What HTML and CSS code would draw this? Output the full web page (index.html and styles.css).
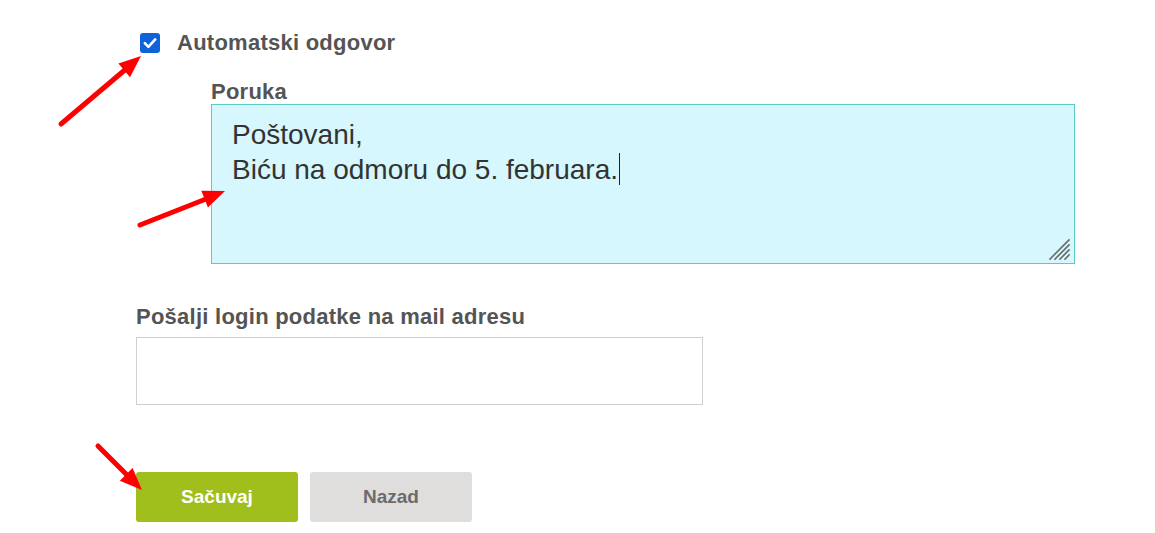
FILE: index.html
```html
<!DOCTYPE html>
<html lang="sr">
<head>
<meta charset="utf-8">
<title>Automatski odgovor</title>
<link rel="stylesheet" href="styles.css">
</head>
<body>
<div class="page">
  <form class="form">
    <label class="check-row">
      <span class="checkbox">
        <svg width="20" height="20" viewBox="0 0 20 20"><path d="M4.8 10.2 L8.4 13.8 L15.2 6.4" fill="none" stroke="#fff" stroke-width="2.6" stroke-linecap="round" stroke-linejoin="round"/></svg>
      </span>
      <span class="check-text">Automatski odgovor</span>
    </label>

    <div class="message">
      <div class="label">Poruka</div>
      <div class="textarea">
        <div>Poštovani,</div>
        <div>Biću na odmoru do 5. februara.<span class="caret"></span></div>
        <svg class="grip" width="24" height="24" viewBox="0 0 24 24">
          <g stroke="#6b6b6b" stroke-width="1.6" stroke-linecap="square">
            <line x1="2" y1="22" x2="21" y2="3"/>
            <line x1="7" y1="22" x2="21" y2="8"/>
            <line x1="12" y1="22" x2="21" y2="13"/>
            <line x1="17" y1="22" x2="21" y2="18"/>
          </g>
        </svg>
      </div>
    </div>

    <div class="field">
      <div class="label">Pošalji login podatke na mail adresu</div>
      <div class="input"></div>
    </div>

    <div class="buttons">
      <button type="button" class="btn btn-save">Sačuvaj</button>
      <button type="button" class="btn btn-back">Nazad</button>
    </div>
  </form>

  <svg class="arrows" width="1155" height="533" viewBox="0 0 1155 533">
    <g stroke="#ff0000" stroke-width="5" stroke-linecap="round" fill="none">
      <line x1="61" y1="124" x2="126" y2="69"/>
      <line x1="140" y1="225" x2="206" y2="199"/>
      <line x1="98" y1="446" x2="128" y2="476"/>
    </g>
    <g fill="#ff0000">
      <polygon points="141,56 118.4,63.4 130,77.2"/>
      <polygon points="225,191 201.3,190.8 207.9,207.6"/>
      <polygon points="142,490 119.8,480.7 132.6,468.1"/>
    </g>
  </svg>
</div>
</body>
</html>
```

FILE: styles.css
```css
* { box-sizing: border-box; }

html, body {
  margin: 0;
  padding: 0;
  background: #ffffff;
}

body {
  font-family: "Liberation Sans", Arial, sans-serif;
  color: #545454;
}

.page {
  position: relative;
  width: 1155px;
  height: 533px;
  overflow: hidden;
}

.form {
  display: flex;
  flex-direction: column;
  padding: 30px 0 0 136px;
}

.check-row {
  display: flex;
  align-items: center;
  height: 26px;
}

.checkbox {
  width: 20px;
  height: 20px;
  margin-left: 4px;
  background: #0f62d9;
  border-radius: 3px;
  display: flex;
}

.check-text {
  margin-left: 17px;
  font-size: 22px;
  font-weight: bold;
  line-height: 26px;
  letter-spacing: 0.25px;
}

.label {
  font-size: 22px;
  font-weight: bold;
  line-height: 26px;
  letter-spacing: 0.25px;
}

.message {
  margin: 23px 0 0 75px;
}

.message .label {
  line-height: 25px;
}

.textarea {
  position: relative;
  width: 864px;
  height: 160px;
  background: #d5f7fd;
  border: 1px solid #5ccbc2;
  padding: 12px 20px;
  font-size: 28px;
  line-height: 35px;
  color: #333333;
}

.caret {
  display: inline-block;
  width: 1px;
  height: 32px;
  background: #222;
  vertical-align: -6px;
  margin-left: 1px;
}

.grip {
  position: absolute;
  right: 2px;
  bottom: 2px;
}

.field {
  margin-top: 40px;
}

.field .label {
  margin-bottom: 7px;
}

.input {
  width: 567px;
  height: 68px;
  border: 1px solid #cfcfcf;
  background: #fff;
}

.buttons {
  display: flex;
  gap: 12px;
  margin-top: 67px;
}

.btn {
  width: 162px;
  height: 50px;
  border: none;
  border-radius: 3px;
  font-family: "Liberation Sans", Arial, sans-serif;
  font-size: 19px;
  font-weight: bold;
  padding: 0;
}

.btn-save {
  background: #a0be1c;
  color: #ffffff;
}

.btn-back {
  background: #dfdedd;
  color: #6b6b6b;
}

.arrows {
  position: absolute;
  left: 0;
  top: 0;
  pointer-events: none;
}
```
